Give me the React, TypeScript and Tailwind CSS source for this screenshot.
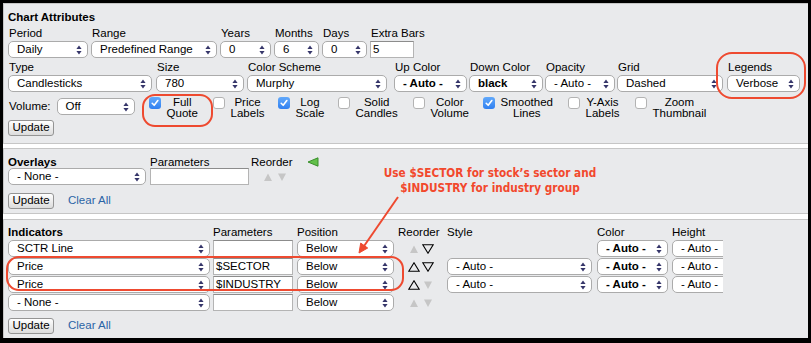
import React from 'react';

const Arrows = () => (
  <svg width="6" height="10" viewBox="0 0 6 10" className="shrink-0">
    <path d="M3 0.5L5.6 4H0.4Z M0.4 6H5.6L3 9.5Z" fill="#36366a" />
  </svg>
);

const Sel = ({ w, text, bold }: { w: string; text: string; bold?: boolean }) => (
  <div
    className={`flex h-[17px] shrink-0 items-center justify-between rounded-[5px] border border-[#ababab] bg-white pl-[8px] pr-[5px] leading-none ${w} ${
      bold ? 'font-bold' : ''
    }`}
  >
    <span className="whitespace-nowrap">{text}</span>
    <Arrows />
  </div>
);

const Input = ({ w, value }: { w: string; value?: string }) => (
  <div
    className={`flex h-[17px] shrink-0 items-center overflow-hidden whitespace-nowrap border border-[#b4b4b4] border-t-[#8c8c8c] bg-white pl-[2px] leading-none ${w}`}
  >
    {value}
  </div>
);

const Button = () => (
  <div className="flex h-[16px] w-[46px] items-center justify-center rounded-[3px] border border-[#949494] bg-linear-to-b from-white to-[#dcdcdc] leading-none">
    Update
  </div>
);

const Box = ({ on }: { on?: boolean }) =>
  on ? (
    <div className="flex h-[12px] w-[12px] shrink-0 items-center justify-center rounded-[3px] bg-linear-to-b from-[#62a9fb] to-[#2f7ff0]">
      <svg width="8" height="8" viewBox="0 0 8 8">
        <path
          d="M1.2 4.3L3.2 6.3L6.8 1.5"
          fill="none"
          stroke="#fff"
          strokeWidth="1.6"
          strokeLinecap="round"
          strokeLinejoin="round"
        />
      </svg>
    </div>
  ) : (
    <div className="h-[12px] w-[12px] shrink-0 rounded-[3px] border border-[#b3b3b3] bg-white" />
  );

const Check = ({ on, l1, l2, w }: { on?: boolean; l1: string; l2: string; w: string }) => (
  <div className={`flex shrink-0 items-start gap-[6px] ${w}`}>
    <Box on={on} />
    <div className="flex flex-col items-center leading-[11px]">
      <span>{l1}</span>
      <span>{l2}</span>
    </div>
  </div>
);

const Tri = ({ up, on }: { up?: boolean; on?: boolean }) => (
  <svg width="12" height="10" viewBox="0 0 12 10" className="shrink-0">
    {on ? (
      <path
        d={up ? 'M6 0.8L11.2 9.2H0.8Z' : 'M0.8 0.8H11.2L6 9.2Z'}
        fill="none"
        stroke="#000"
        strokeWidth="1.1"
      />
    ) : (
      <path d={up ? 'M6 1.5L10 9H2Z' : 'M2 1.5H10L6 9Z'} fill="#c6c6c6" />
    )}
  </svg>
);

const Field = ({ w, label, children }: { w: string; label: string; children: React.ReactNode }) => (
  <div className={`flex shrink-0 flex-col ${w}`}>
    <div className="h-[14px] whitespace-nowrap pl-[1px] leading-[14px]">{label}</div>
    <div className="mt-[1px]">{children}</div>
  </div>
);

const Clipped = () => (
  <div className="w-[51px] overflow-hidden">
    <Sel w="w-[72px]" text="- Auto -" />
  </div>
);

const indicatorRows = [
  { name: 'SCTR Line', param: '', up: false, down: true, style: false, color: true },
  { name: 'Price', param: '$SECTOR', up: true, down: true, style: true, color: true },
  { name: 'Price', param: '$INDUSTRY', up: true, down: false, style: true, color: true },
  { name: '- None -', param: '', up: false, down: false, style: false, color: false },
];

const grid = 'grid grid-cols-[205px_84px_100px_50px_150px_75px_60px]';

export default function App() {
  return (
    <div className="relative h-[343px] w-[811px] overflow-hidden bg-black pl-[3px] pt-[3px] font-['Liberation_Sans',Arial,Helvetica,sans-serif] text-[11.5px] text-black">
      <div className="flex h-[335px] w-[805px] flex-col overflow-hidden bg-white">
        {/* chart attributes */}
        <div className="h-[141px] shrink-0 border border-r-0 border-[#c6c6c6] bg-[#e9eaec] pl-[4px] pt-[6px]">
          <div className="h-[14px] font-bold leading-[14px]">Chart Attributes</div>
          <div className="mt-[2px] flex">
            <Field w="w-[83px]" label="Period">
              <Sel w="w-[80px]" text="Daily" />
            </Field>
            <Field w="w-[129px]" label="Range">
              <Sel w="w-[126px]" text="Predefined Range" />
            </Field>
            <Field w="w-[54px]" label="Years">
              <Sel w="w-[51px]" text="0" />
            </Field>
            <Field w="w-[48px]" label="Months">
              <Sel w="w-[45px]" text="6" />
            </Field>
            <Field w="w-[48px]" label="Days">
              <Sel w="w-[45px]" text="0" />
            </Field>
            <Field w="w-[80px]" label="Extra Bars">
              <Input w="w-[44px]" value="5" />
            </Field>
          </div>
          <div className="mt-[2px] flex">
            <Field w="w-[148px]" label="Type">
              <Sel w="w-[144px]" text="Candlesticks" />
            </Field>
            <Field w="w-[91px]" label="Size">
              <Sel w="w-[88px]" text="780" />
            </Field>
            <Field w="w-[147px]" label="Color Scheme">
              <Sel w="w-[140px]" text="Murphy" />
            </Field>
            <Field w="w-[75px]" label="Up Color">
              <Sel w="w-[73px]" text="- Auto -" bold />
            </Field>
            <Field w="w-[76px]" label="Down Color">
              <Sel w="w-[74px]" text="black" bold />
            </Field>
            <Field w="w-[72px]" label="Opacity">
              <Sel w="w-[70px]" text="- Auto -" />
            </Field>
            <Field w="w-[110px]" label="Grid">
              <Sel w="w-[106px]" text="Dashed" />
            </Field>
            <Field w="w-[80px]" label="Legends">
              <Sel w="w-[73px]" text="Verbose" />
            </Field>
          </div>
          <div className="mt-[5px] flex h-[22px] items-start">
            <div className="mt-[1px] flex h-[17px] items-center">
              <span className="pl-[1px]">Volume:</span>
              <div className="ml-[6px]">
                <Sel w="w-[78px]" text="Off" />
              </div>
            </div>
            <div className="ml-[14px] flex">
              <Check w="w-[64px]" on l1="Full" l2="Quote" />
              <Check w="w-[65px]" l1="Price" l2="Labels" />
              <Check w="w-[60px]" on l1="Log" l2="Scale" />
              <Check w="w-[75px]" l1="Solid" l2="Candles" />
              <Check w="w-[70px]" l1="Color" l2="Volume" />
              <Check w="w-[85px]" on l1="Smoothed" l2="Lines" />
              <Check w="w-[67px]" l1="Y-Axis" l2="Labels" />
              <Check w="w-[90px]" l1="Zoom" l2="Thumbnail" />
            </div>
          </div>
          <div className="mt-[1px]">
            <Button />
          </div>
        </div>

        {/* overlays */}
        <div className="mt-[4px] h-[66px] shrink-0 border border-r-0 border-[#c6c6c6] bg-[#e9eaec] pl-[4px] pt-[7px]">
          <div className="flex h-[12px] items-center leading-[12px]">
            <div className="w-[142px] font-bold">Overlays</div>
            <div className="w-[101px]">Parameters</div>
            <div>Reorder</div>
            <svg width="12" height="10" viewBox="0 0 12 10" className="ml-[14px]">
              <path d="M1 5L11 0.8V9.2Z" fill="#62c04a" stroke="#3a8f2c" strokeWidth="1" strokeLinejoin="round" />
            </svg>
          </div>
          <div className="flex">
            <div className="w-[142px]">
              <Sel w="w-[138px]" text="- None -" />
            </div>
            <div className="w-[101px]">
              <Input w="w-[99px]" />
            </div>
            <div className="flex h-[17px] items-center gap-[2px] pl-[11px]">
              <Tri up />
              <Tri />
            </div>
          </div>
          <div className="mt-[7px] flex items-center">
            <Button />
            <span className="ml-[14px] text-[#2b64a6]">Clear All</span>
          </div>
        </div>

        {/* indicators */}
        <div className="mt-[5px] h-[140px] shrink-0 border border-r-0 border-[#c6c6c6] bg-[#e9eaec] pl-[4px] pt-[6px]">
          <div className={`${grid} h-[12px] leading-[12px]`}>
            <div className="font-bold">Indicators</div>
            <div>Parameters</div>
            <div>Position</div>
            <div className="pl-[1px]">Reorder</div>
            <div>Style</div>
            <div>Color</div>
            <div>Height</div>
          </div>
          <div className="mt-[2px] flex flex-col gap-[1px]">
            {indicatorRows.map((row, i) => (
              <div key={i} className={grid}>
                <Sel w="w-[202px]" text={row.name} />
                <Input w="w-[80px]" value={row.param} />
                <Sel w="w-[97px]" text="Below" />
                <div className="flex h-[17px] items-center gap-[2px] pl-[11px]">
                  <Tri up on={row.up} />
                  <Tri on={row.down} />
                </div>
                <div>{row.style && <Sel w="w-[145px]" text="- Auto -" />}</div>
                <div>{row.color && <Sel w="w-[71px]" text="- Auto -" bold />}</div>
                <div>{row.color && <Clipped />}</div>
              </div>
            ))}
          </div>
          <div className="mt-[6px] flex items-center">
            <Button />
            <span className="ml-[14px] text-[#2b64a6]">Clear All</span>
          </div>
        </div>
      </div>

      {/* annotations */}
      <div className="absolute left-[142px] top-[94px] h-[33px] w-[71px] rounded-[13px] border-2 border-[#ee4a30]" />
      <div className="absolute left-[716px] top-[52px] h-[47px] w-[90px] rounded-[16px] border-2 border-[#ee4a30]" />
      <div className="absolute left-[6px] top-[256px] h-[35px] w-[398px] rounded-[13px] border-2 border-[#ee4a30]" />
      <div className="absolute left-[360px] top-[166px] w-[260px] text-center font-['DejaVu_Sans_Condensed','DejaVu_Sans',sans-serif] text-[11.7px] font-bold leading-[15px] text-[#f2482c]">
        <div>Use $SECTOR for stock’s sector and</div>
        <div>$INDUSTRY for industry group</div>
      </div>
      <svg className="absolute left-[350px] top-[190px]" width="56" height="70" viewBox="0 0 56 70">
        <path d="M48 7L12 59" stroke="#ee4a30" strokeWidth="2" />
        <path d="M9 63L17.7 58L10.7 53.1Z" fill="#ee4a30" stroke="#ee4a30" strokeWidth="1" strokeLinejoin="round" />
      </svg>
    </div>
  );
}
